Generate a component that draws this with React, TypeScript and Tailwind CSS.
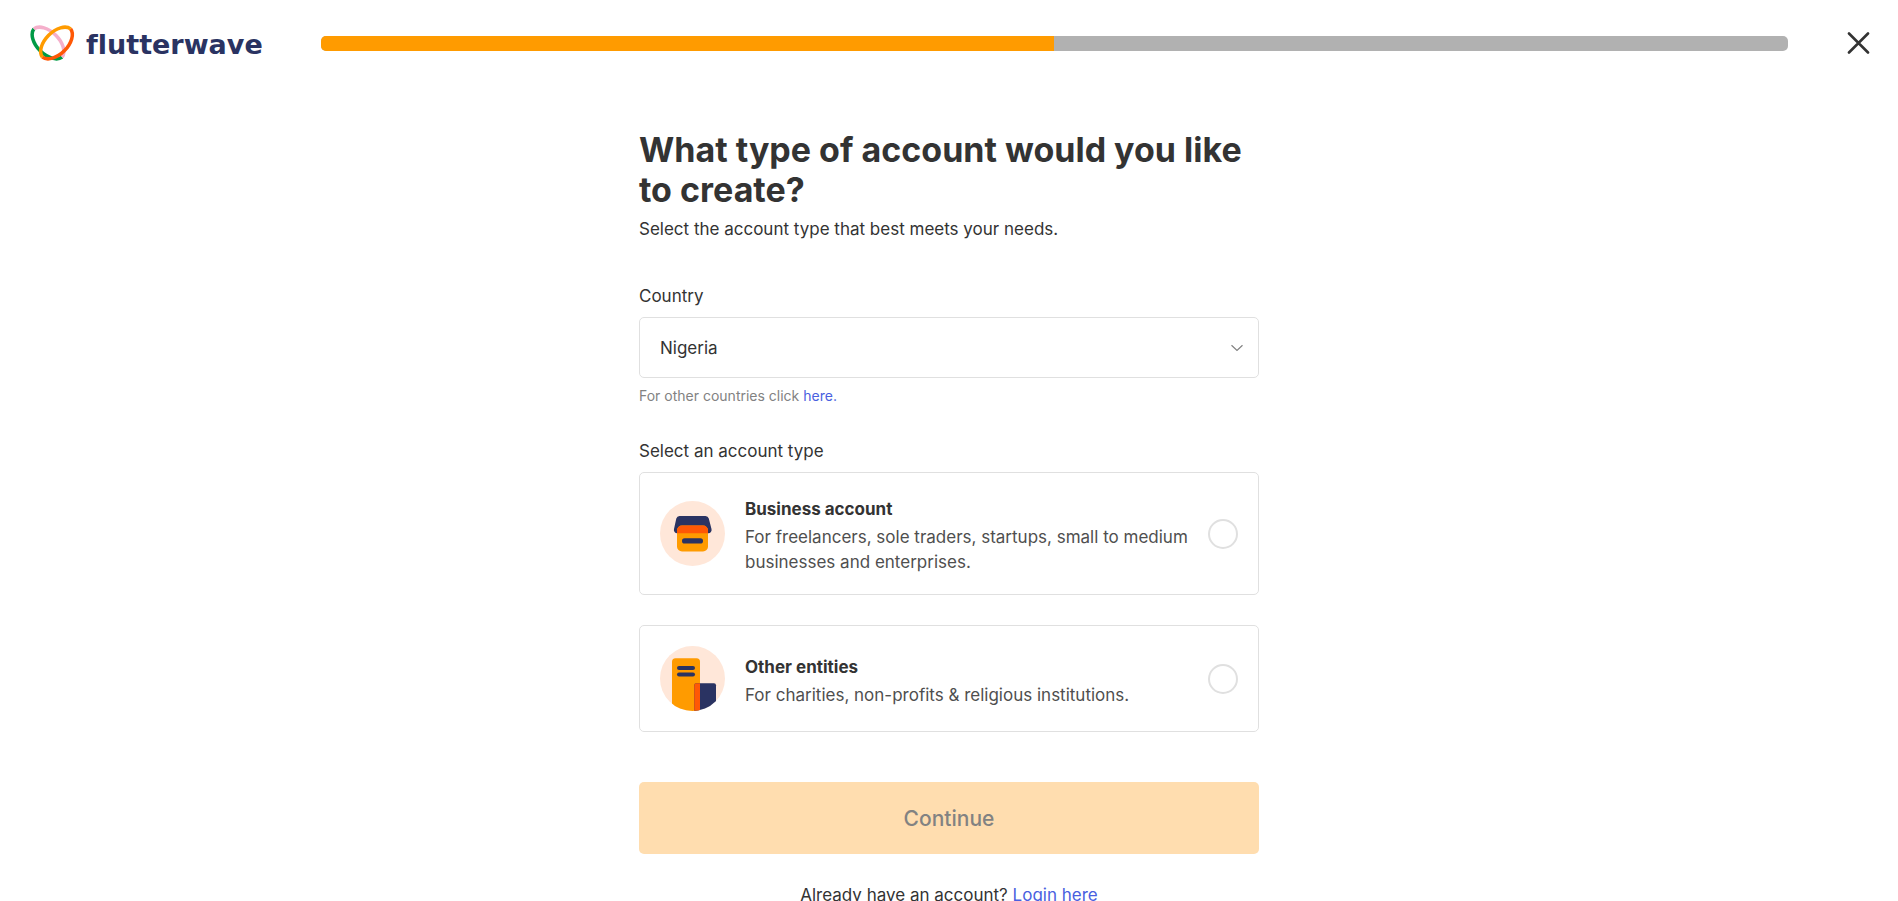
import { useState } from 'react'
import type { ReactNode } from 'react'

interface AccountType {
  id: string
  title: string
  description: string
  icon: ReactNode
}

function LogoMark() {
  return (
    <svg viewBox="0 0 46 38" className="w-[46px] h-[38px] shrink-0" fill="none" strokeWidth="3.5" aria-hidden="true">
      {/* left loop */}
      <path d="M3.9 4.9A20 12 45 0 0 32.1 33.1" stroke="#009A46" />
      <path d="M3.9 4.9A20 12 45 0 1 32.1 33.1" stroke="#F5AFCB" />
      {/* right loop */}
      <path d="M40.6 4.9A20 12 -45 0 1 12.4 33.1" stroke="#FF5805" />
      <path d="M40.6 4.9A20 12 -45 0 0 12.4 33.1" stroke="#FF9B00" />
    </svg>
  )
}

function StoreIcon() {
  return (
    <svg viewBox="0 0 65 65" className="w-[65px] h-[65px] my-0.5 shrink-0" aria-hidden="true">
      <circle cx="32.5" cy="32.5" r="32.5" fill="#FFE7D9" />
      <path d="M19.5 15h26a3.500 3.500 0 0 1 3.300 2.500l2.700 10.500a3.300 3.300 0 0 1-3.200 4.200H17.200a3.300 3.300 0 0 1-3.200-4.200l2.300-10.500a3.500 3.500 0 0 1 3.200-2.500z" fill="#2A3362" />
      <rect x="17" y="24.500" width="31" height="26" rx="5" fill="#FF9B00" />
      <path d="M17 32.300v-2.800a5 5 0 0 1 5-5h21a5 5 0 0 1 5 5v2.800z" fill="#FF5805" />
      <rect x="22" y="37.300" width="21" height="5.200" rx="2.600" fill="#2A3362" />
    </svg>
  )
}

function BuildingIcon() {
  return (
    <svg viewBox="0 0 65 65" className="w-[65px] h-[65px] my-0.5 shrink-0" aria-hidden="true">
      <clipPath id="building-clip">
        <circle cx="32.5" cy="32.5" r="32.5" />
      </clipPath>
      <g clipPath="url(#building-clip)">
        <rect width="65" height="65" fill="#FFE7D9" />
        <rect x="12" y="12.300" width="28" height="60" rx="3.500" fill="#FF9B00" />
        <rect x="34.300" y="37.300" width="21.700" height="35" rx="2" fill="#2A3362" />
        <path d="M40 37.300v28h-5.700v-26a2 2 0 0 1 2-2z" fill="#FF5805" />
        <rect x="17" y="20" width="18" height="4" rx="2" fill="#2A3362" />
        <rect x="17" y="26.500" width="18" height="4" rx="2" fill="#2A3362" />
      </g>
    </svg>
  )
}

const accountTypes: AccountType[] = [
  {
    id: 'business',
    title: 'Business account',
    description: 'For freelancers, sole traders, startups, small to medium businesses and enterprises.',
    icon: <StoreIcon />,
  },
  {
    id: 'other',
    title: 'Other entities',
    description: 'For charities, non-profits & religious institutions.',
    icon: <BuildingIcon />,
  },
]

export default function App() {
  const [country, setCountry] = useState('Nigeria')
  const [accountType, setAccountType] = useState('')
  const progress = 50

  return (
    <div className="h-screen overflow-y-auto [scrollbar-width:none] bg-white font-[Inter,sans-serif] text-[17px] leading-[26px] text-[#333333]">
      <header className="flex items-center h-[86px] pl-[30px] pr-7">
        <a href="#" className="flex items-center gap-[10px] text-[#2A3362]">
          <LogoMark />
          <span className="pt-1 font-['DejaVu_Sans',sans-serif] font-bold text-[27px] leading-8 [font-variant-ligatures:none]">flutterwave</span>
        </a>
        <div
          role="progressbar"
          aria-valuenow={progress}
          className="flex-1 h-[15px] ml-[58px] mr-[59px] rounded-[5px] bg-[#B1B1B1] overflow-hidden"
        >
          <div className="h-full bg-[#FF9B00]" style={{ width: `${progress}%` }} />
        </div>
        <button type="button" aria-label="Close">
          <svg viewBox="0 0 23 23" className="w-[23px] h-[23px]" fill="none" stroke="#333333" strokeWidth="2.6" strokeLinecap="round">
            <path d="M2 1.500l19 19M21 1.500L2 20.500" />
          </svg>
        </button>
      </header>

      <main className="max-w-[620px] mx-auto pt-11 pb-10">
        <h1 className="text-[34px] leading-10 font-bold">What type of account would you like to create?</h1>
        <p className="mt-1.5">Select the account type that best meets your needs.</p>

        <form onSubmit={e => e.preventDefault()}>
          <label htmlFor="country" className="block mt-[41px] mb-2">Country</label>
          <div className="relative">
            <select
              id="country"
              value={country}
              onChange={e => setCountry(e.target.value)}
              className="block w-full h-[61px] px-5 appearance-none rounded-[5px] border border-[#E0E0E0] bg-white"
            >
              <option>Nigeria</option>
              <option>Ghana</option>
              <option>Kenya</option>
            </select>
            <svg viewBox="0 0 12 7" className="absolute right-4 top-1/2 -translate-y-1/2 w-3 h-[7px] pointer-events-none" fill="none" stroke="#828282" strokeWidth="1.2" aria-hidden="true">
              <path d="M.5 .7L6 6L11.500 .7" />
            </svg>
          </div>
          <p className="mt-2 text-sm text-[#828282]">
            For other countries click <a href="#" className="text-[#4A5FE0]">here.</a>
          </p>

          <fieldset className="mt-8">
            <legend className="mb-2">Select an account type</legend>
            <div className="flex flex-col gap-[30px]">
              {accountTypes.map(type => (
                <label
                  key={type.id}
                  htmlFor={type.id}
                  className="flex items-center gap-5 px-5 py-[18px] rounded-[5px] border border-[#E0E0E0] cursor-pointer"
                >
                  {type.icon}
                  <span className="flex-1 flex flex-col gap-[5px] pt-[7px] pb-px">
                    <span className="font-bold leading-[22px]">{type.title}</span>
                    <span className="leading-[25px] text-[#4F4F4F]">{type.description}</span>
                  </span>
                  <input
                    type="radio"
                    id={type.id}
                    name="accountType"
                    checked={accountType === type.id}
                    onChange={() => setAccountType(type.id)}
                    className="appearance-none shrink-0 w-[30px] h-[30px] rounded-full border-2 border-[#E0E0E0] checked:border-8 checked:border-[#FF9B00]"
                  />
                </label>
              ))}
            </div>
          </fieldset>

          <button
            type="submit"
            disabled={!accountType}
            className="w-full h-[72px] mt-[50px] pt-0.5 rounded-[5px] bg-[#FF9B00] text-[21px] font-medium disabled:bg-[#FFDDAF] disabled:text-[#828282]"
          >
            Continue
          </button>
        </form>

        <p className="mt-7 text-center">
          Already have an account? <a href="#" className="text-[#4A5FE0] underline">Login here</a>
        </p>
      </main>
    </div>
  )
}
